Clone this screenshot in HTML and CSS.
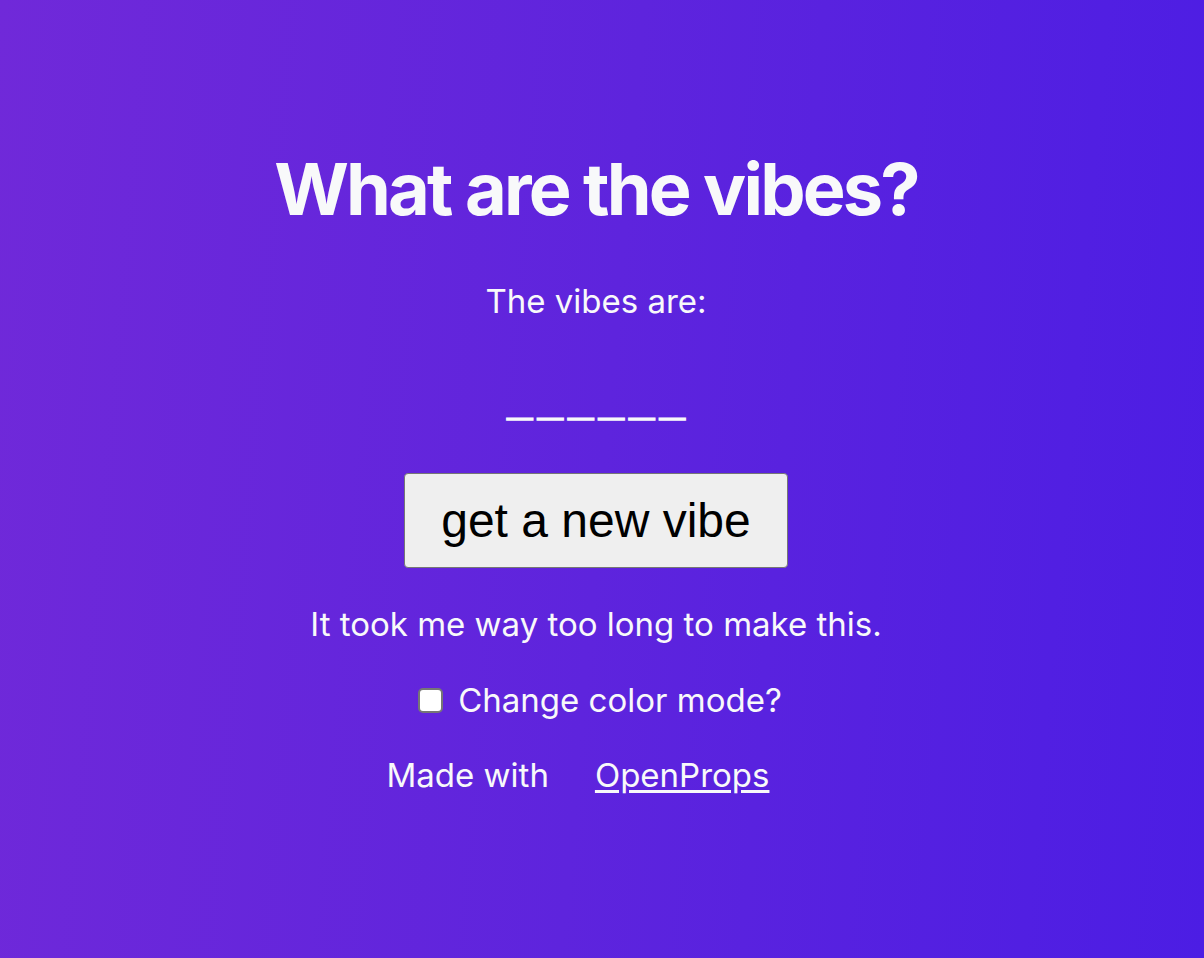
FILE: index.html
```html
<!DOCTYPE html>
<html lang="en">
<head>
<meta charset="utf-8">
<title>What are the vibes?</title>
<link rel="stylesheet" href="styles.css">
</head>
<body>
<main class="page">
  <h1 class="title">What are the vibes?</h1>
  <p class="lead">The vibes are:</p>
  <p class="vibe">______</p>
  <button class="vibe-btn" type="button">get a new vibe</button>
  <p class="note">It took me way too long to make this.</p>
  <label class="mode">
    <input class="mode-box" type="checkbox">
    <span>Change color mode?</span>
  </label>
  <p class="made">
    <span>Made with</span>
    <a class="made-link" href="#">OpenProps</a>
  </p>
</main>
</body>
</html>
```

FILE: styles.css
```css
html, body {
  margin: 0;
  padding: 0;
}

body {
  min-height: 100vh;
  background: linear-gradient(95deg, #7029d9 0%, #5e24dd 50%, #4c1de4 100%);
  color: #f8f9fa;
  font-family: Inter, "Noto Sans", sans-serif;
}

.page {
  display: flex;
  flex-direction: column;
  align-items: center;
  padding: 153px 12px 0 0;
}

.title {
  margin: 0;
  font-size: 72px;
  line-height: 1;
  font-weight: 700;
  letter-spacing: -2.8px;
}

.lead {
  margin: 57px 0 0;
  font-size: 33px;
  line-height: 1.2;
}

.vibe {
  margin: 55px 0 0;
  font-family: "Liberation Sans", Arial, sans-serif;
  font-weight: 700;
  font-size: 45px;
  line-height: 1;
  letter-spacing: 5.5px;
  margin-right: -5.5px;
  -webkit-text-stroke: 1.6px #f8f9fa;
}

.vibe-btn {
  margin-top: 51px;
  font-family: "Liberation Sans", Arial, sans-serif;
  font-size: 48px;
  padding: 0.4em 0.75em;
  color: #000;
  background: #efefef;
  border: 1px solid #767676;
  border-radius: 4px;
}

.note {
  margin: 37px 0 0;
  font-size: 33px;
  line-height: 1.2;
}

.mode {
  margin-top: 36px;
  display: flex;
  align-items: center;
  gap: 15px;
  font-size: 33px;
  line-height: 1.2;
  padding-left: 8px;
}

.mode-box {
  appearance: none;
  -webkit-appearance: none;
  margin: 0;
  width: 25px;
  height: 25px;
  background: #fff;
  border: 2px solid #767676;
  border-radius: 5px;
}

.made {
  margin: 36px 0 0;
  display: flex;
  gap: 46px;
  font-size: 33px;
  line-height: 1.2;
  padding-right: 36px;
}

.made-link {
  color: #f8f9fa;
  text-decoration: underline;
  text-underline-offset: 3px;
}
```
